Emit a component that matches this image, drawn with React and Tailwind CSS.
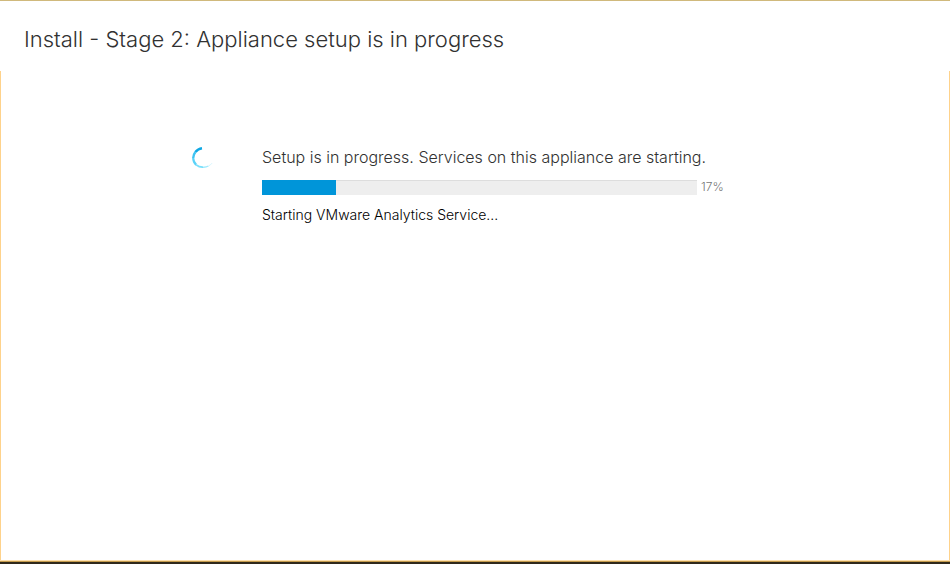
function Spinner() {
  return (
    <svg
      className="h-6 w-6 shrink-0"
      viewBox="-1 -1 24 24"
      fill="none"
      role="img"
      aria-label="Loading"
    >
      <path d="M11 2.2A10 10 0 0 0 4.4 6" stroke="#0fa8e4" strokeWidth="2.6" />
      <path d="M4.4 6A10 10 0 0 0 2.2 12" stroke="#3fc3f2" strokeWidth="2.4" />
      <path d="M2.2 12A10 10 0 0 0 5.2 18.9" stroke="#5ad2f8" strokeWidth="2.2" />
      <path d="M5.2 18.9A10 10 0 0 0 12 21.2" stroke="#78dffb" strokeWidth="1.8" />
      <path d="M12 21.2A10 10 0 0 0 17.5 20" stroke="#a0eafd" strokeWidth="1.4" />
      <path d="M17.5 20A10 10 0 0 0 21 17.2" stroke="#d4f5fe" strokeWidth="1" />
    </svg>
  );
}

function ProgressBar({ value }) {
  return (
    <div className="flex items-center gap-1">
      <div
        role="progressbar"
        aria-label="Appliance setup"
        aria-valuenow={value}
        aria-valuemin={0}
        aria-valuemax={100}
        className="h-[15px] flex-1 border-t border-[#dddddd] bg-[#eeeeee]"
      >
        <div className="-mt-px h-[15px] bg-[#0095d9]" style={{ width: `${value}%` }} />
      </div>
      <span className="w-14 text-xs font-light text-[#777777]">{value}%</span>
    </div>
  );
}

function App() {
  const progress = 17;

  return (
    <div className="flex min-h-screen flex-col border-t border-[#d0b97c] bg-white font-['Inter','Liberation_Sans',sans-serif]">
      {/* Header */}
      <header className="px-6 pt-[22px] pb-4">
        <h1 className="text-[22px] leading-8 font-light text-[#313131]">
          Install - Stage 2: Appliance setup is in progress
        </h1>
      </header>

      {/* Content */}
      <main className="flex flex-1 items-start border-x border-[#fed28b] pt-[74px] pr-48 pl-[189px]">
        <Spinner />
        <div className="ml-12 flex-1">
          <p className="text-base leading-6 font-light text-[#313131]">
            Setup is in progress. Services on this appliance are starting.
          </p>
          <div className="mt-2.5">
            <ProgressBar value={progress} />
          </div>
          <p className="mt-2.5 text-sm leading-5 font-light text-black">
            Starting VMware Analytics Service...
          </p>
        </div>
      </main>

      <div className="h-1 border-t border-[#fee0ac] bg-[#2f291b]">
        <div className="h-px bg-[#c49b4c]" />
      </div>
    </div>
  );
}

export default App;
